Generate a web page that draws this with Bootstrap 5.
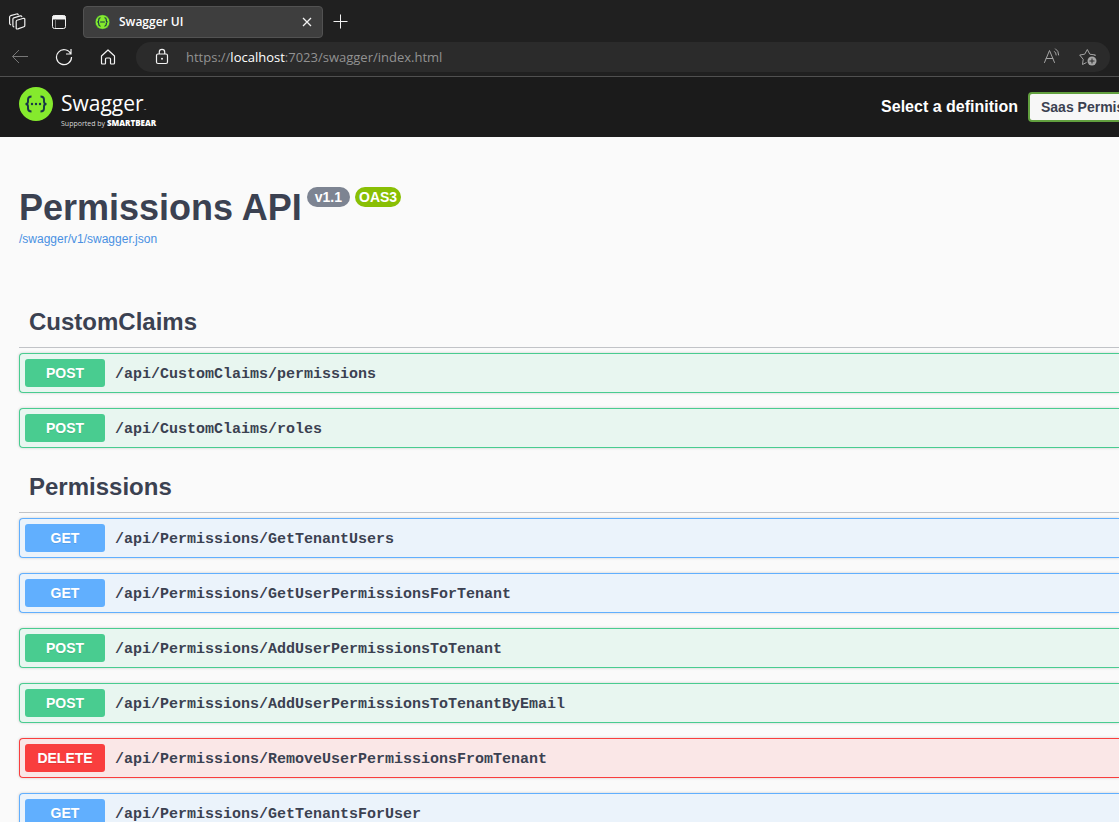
<!DOCTYPE html>
<html lang="en">
<head>
<meta charset="utf-8">
<meta name="viewport" content="width=device-width, initial-scale=1">
<title>Swagger UI</title>
<link href="https://cdn.jsdelivr.net/npm/bootstrap@5.3.0/dist/css/bootstrap.min.css" rel="stylesheet">
<style>
body { background: #fafafa; color: #3b4151; font-family: "Liberation Sans", Arial, sans-serif; }
svg { display: block; flex: none; }
.browser { background: #202020; color: #fff; border-bottom: 1px solid #505050; font-family: "Open Sans", "Noto Sans", sans-serif; }
.icon-btn { padding: 0; border: 0; background: none; color: #f2f2f2; }
.strip { height: 38px; padding: 6px 8px 0; }
.strip-tools { width: 59px; }
.page-tab { width: 240px; height: 32px; padding: 0 8px 0 10px; background: #3e3e3e; border: 1px solid #525252; border-radius: 4px; font-size: 12px; font-weight: 600; }
.tools { padding: 4px 9px 4px 11px; }
.nav-tools { width: 125px; padding-right: 19px; }
.address { height: 30px; border-radius: 15px; background: #2b2b2b; padding: 0 12px 0 18px; }
.url { color: #929292; font-size: 13px; line-height: 20px; text-decoration: none; }
.url strong { color: #fff; font-weight: 400; }
.topbar { background: #1b1b1b; height: 60px; padding-left: 19px; color: #fff; }
.brand { color: #fff; text-decoration: none; font-family: "Open Sans", sans-serif; padding-top: 10px; }
.brand-name { font-size: 21px; line-height: 32px; height: 32px; font-weight: 400; }
.brand-by { font-size: 7px; line-height: 8px; height: 8px; color: #d8d8d8; white-space: nowrap; }
.brand-by b { font-size: 8px; font-weight: 800; color: #fff; }
.tm { font-size: 3px; line-height: 3px; }
.def-label { font-size: 16px; line-height: 20px; font-weight: 700; margin-right: 10px; }
.def-clip { width: 91px; }
.def-select { width: 240px; height: 30px; padding: 0 11px; border: 2px solid #62a03f; border-radius: 4px; background: #f7f7f7; color: #3b4151; font-size: 14px; font-weight: 700; appearance: none; }
.page-body { padding-left: 19px; }
.info { padding: 48px 0 50px; }
.title-row { gap: 5px; }
.api-title { font-size: 36px; line-height: 44px; font-weight: 700; margin: 0; padding-top: 1px; }
.pill { border-radius: 20px; height: 20px; line-height: 20px; font-size: 14px; font-weight: 700; color: #fff; background: #7d8492; margin-top: 2px; }
.pill-oas { background: #89bf04; }
.spec { font-size: 12px; line-height: 18px; color: #4990e2; text-decoration: none; }
.tag-title { font-size: 24px; line-height: 29px; font-weight: 700; margin: 0 0 5px; padding: 9px 10px 11px; border-bottom: 1px solid #c1c3c7; }
.op { --c: #49cc90; --bg: #e8f6f0; width: 100%; height: 40px; margin-bottom: 15px; padding: 5px; color: #3b4151; text-align: left; background: var(--bg); border: 1px solid var(--c); border-right: 0; border-radius: 4px 0 0 4px; box-shadow: 0 0 3px rgba(0,0,0,.19); }
.op-get { --c: #61affe; --bg: #ebf3fb; }
.op-delete { --c: #f93e3e; --bg: #fae7e7; }
.verb { width: 80px; height: 28px; line-height: 28px; border-radius: 3px; background: var(--c); color: #fff; font-size: 14px; font-weight: 700; text-align: center; text-shadow: 0 1px 0 rgba(0,0,0,.1); }
.route { padding: 4px 0 0 10px; font-family: "Liberation Mono", monospace; font-size: 15px; line-height: 20px; font-weight: 700; white-space: nowrap; }
</style>
</head>
<body>
<div class="vh-100 d-flex flex-column overflow-hidden">
<header class="browser flex-shrink-0">
  <div class="strip d-flex align-items-center">
    <div class="strip-tools d-flex align-items-center justify-content-between me-3">
      <button class="icon-btn" aria-label="Workspaces"><svg width="18" height="18" viewBox="0 0 18 18" fill="none" stroke="currentColor" stroke-width="1.200" stroke-linejoin="round" stroke-linecap="round"><path d="M9 7.300 15.600 5.300q1.200-.3 1.200.9v6.200q0 1-.9 1.300L10 15.900q-1.800.5-1.800-1V8.400q0-.8.8-1.100zM5.800 13.800Q4.900 13.600 4.900 12.500V6.100q0-1 .9-1.300L12.200 2.900q1.300-.3 1.600.8M2.600 11.800Q1.600 11.500 1.600 10.300V4.100q0-1 1-1.400L8.600 1q1.200-.3 1.600.7"/></svg></button>
      <button class="icon-btn" aria-label="Tab actions"><svg width="16" height="16" viewBox="0 0 16 16" fill="none" stroke="currentColor"><rect x="1.500" y="1.500" width="13" height="13" rx="2"/><path d="M2 2h12v3H2z" fill="currentColor"/><path d="M4.500 5.500v8.500" stroke="#777"/></svg></button>
    </div>
    <div class="page-tab d-flex align-items-center">
      <svg class="me-2" width="17" height="16" viewBox="0 0 34 34"><circle cx="17" cy="17" r="15.500" fill="#85ea2d" stroke="#173647" stroke-width="1"/><path d="M13 8q-4 0-4 4v2q0 3-3 3 3 0 3 3v2q0 4 4 4M21 8q4 0 4 4v2q0 3 3 3-3 0-3 3v2q0 4-4 4M12 17h10" fill="none" stroke="#173647" stroke-width="2.500"/></svg>
      <span class="flex-grow-1">Swagger UI</span>
      <button class="icon-btn" aria-label="Close tab"><svg width="14" height="14" viewBox="0 0 14 14" fill="none" stroke="currentColor" stroke-width="1.300"><path d="m3 3 8 8m0-8-8 8"/></svg></button>
    </div>
    <button class="icon-btn ms-2" aria-label="New tab"><svg width="18" height="18" viewBox="0 0 18 18" fill="none" stroke="currentColor"><path d="M2.500 8.500h14m-7-7v14"/></svg></button>
  </div>
  <div class="tools d-flex align-items-center">
    <div class="nav-tools d-flex align-items-center justify-content-between flex-shrink-0">
      <button class="icon-btn" aria-label="Back"><svg width="18" height="18" viewBox="0 0 18 18" fill="none" stroke="#777"><path d="M17 8.500H1.500M8 2 1.500 8.500 8 15"/></svg></button>
      <button class="icon-btn" aria-label="Refresh"><svg width="18" height="18" viewBox="0 0 18 18" fill="none" stroke="currentColor" stroke-width="1.200"><path d="M15.800 6A7.500 7.500 0 1 0 16.500 9M16 1v5h-5"/></svg></button>
      <button class="icon-btn" aria-label="Home"><svg width="18" height="18" viewBox="0 0 18 18" fill="none" stroke="currentColor" stroke-width="1.200" stroke-linejoin="round"><path d="M2.500 8 9 2l6.500 6v7q0 1-1 1h-2.300q-.7 0-.7-.7V11q0-1-1-1h-3q-1 0-1 1v4.300q0 .7-.7.7H3.500q-1 0-1-1z"/></svg></button>
    </div>
    <div class="address flex-grow-1 d-flex align-items-center">
      <svg class="me-3" width="16" height="18" viewBox="0 0 16 18" fill="none" stroke="#f2f2f2" stroke-width="1.200"><rect x="2.500" y="6" width="11" height="9.500" rx="1.500"/><path d="M5.300 6V4a2.700 2.700 0 0 1 5.400 0v2"/><circle cx="8" cy="10.700" r="1" fill="#f2f2f2" stroke="none"/></svg>
      <a class="url flex-grow-1" href="#">https://<strong>localhost</strong>:7023/swagger/index.html</a>
      <button class="icon-btn me-3" aria-label="Read aloud"><svg width="18" height="18" viewBox="0 0 18 18" fill="none" stroke="#a5a5a5" stroke-linecap="round"><path d="M.5 14.500 5.500 2.500l5 12M2.200 10.500h6.600M10.500 3.500q1.700 1.200 1.700 3.500M11.500.8q3.200 1.800 3.200 6.200"/></svg></button>
      <button class="icon-btn" aria-label="Add to favorites"><svg width="20" height="20" viewBox="0 0 20 20" fill="none" stroke="#a5a5a5" stroke-linejoin="round"><path d="M8.500 15.500 4.500 17.500 5.200 12.300 1.700 8l5-.8L9.300 2.500l2.500 4.700 5.700.8-1 1"/><circle cx="14" cy="14" r="4.500" fill="#a5a5a5" stroke="none"/><path d="M11.500 14h5M14 11.500v5" stroke="#2b2b2b"/></svg></button>
    </div>
  </div>
</header>

<nav class="topbar d-flex align-items-center flex-shrink-0" aria-label="Swagger">
  <a class="brand d-flex align-self-start" href="#">
    <svg class="me-2" width="34" height="34" viewBox="0 0 34 34"><circle cx="17" cy="17" r="17" fill="#85ea2d"/><path d="M12.500 9.500q-3.500 0-3.500 3v2q0 2.500-2.500 2.500 2.500 0 2.500 2.500v2q0 3 3.500 3M21.500 9.500q3.500 0 3.500 3v2q0 2.500 2.500 2.500-2.500 0-2.500 2.500v2q0 3-3.500 3" fill="none" stroke="#173647" stroke-width="1.900"/><g fill="#173647"><circle cx="13" cy="17" r="1.200"/><circle cx="17" cy="17" r="1.200"/><circle cx="21" cy="17" r="1.200"/></g></svg>
    <span class="d-flex flex-column">
      <span class="brand-name">Swagger<span class="tm">™</span></span>
      <span class="brand-by">Supported by <b>SMARTBEAR</b></span>
    </span>
  </a>
  <label class="def-label ms-auto" for="definition">Select a definition</label>
  <div class="def-clip overflow-hidden"><select class="def-select d-block" id="definition"><option>Saas Permissions</option></select></div>
</nav>

<main class="page-body flex-grow-1 overflow-hidden">
  <section class="info">
    <div class="title-row d-flex align-items-start">
      <h1 class="api-title">Permissions API</h1>
      <span class="pill px-2">v1.1</span>
      <span class="pill pill-oas px-1">OAS3</span>
    </div>
    <a class="spec d-block" href="#">/swagger/v1/swagger.json</a>
  </section>

  <section>
    <h2 class="tag-title">CustomClaims</h2>
    <button class="op d-flex align-items-center"><span class="verb">POST</span><span class="route">/api/CustomClaims/permissions</span></button>
    <button class="op d-flex align-items-center"><span class="verb">POST</span><span class="route">/api/CustomClaims/roles</span></button>
  </section>
  <section>
    <h2 class="tag-title">Permissions</h2>
    <button class="op op-get d-flex align-items-center"><span class="verb">GET</span><span class="route">/api/Permissions/GetTenantUsers</span></button>
    <button class="op op-get d-flex align-items-center"><span class="verb">GET</span><span class="route">/api/Permissions/GetUserPermissionsForTenant</span></button>
    <button class="op d-flex align-items-center"><span class="verb">POST</span><span class="route">/api/Permissions/AddUserPermissionsToTenant</span></button>
    <button class="op d-flex align-items-center"><span class="verb">POST</span><span class="route">/api/Permissions/AddUserPermissionsToTenantByEmail</span></button>
    <button class="op op-delete d-flex align-items-center"><span class="verb">DELETE</span><span class="route">/api/Permissions/RemoveUserPermissionsFromTenant</span></button>
    <button class="op op-get d-flex align-items-center"><span class="verb">GET</span><span class="route">/api/Permissions/GetTenantsForUser</span></button>
  </section>
</main>
</div>
<script src="https://cdn.jsdelivr.net/npm/bootstrap@5.3.0/dist/js/bootstrap.bundle.min.js"></script>
</body>
</html>
